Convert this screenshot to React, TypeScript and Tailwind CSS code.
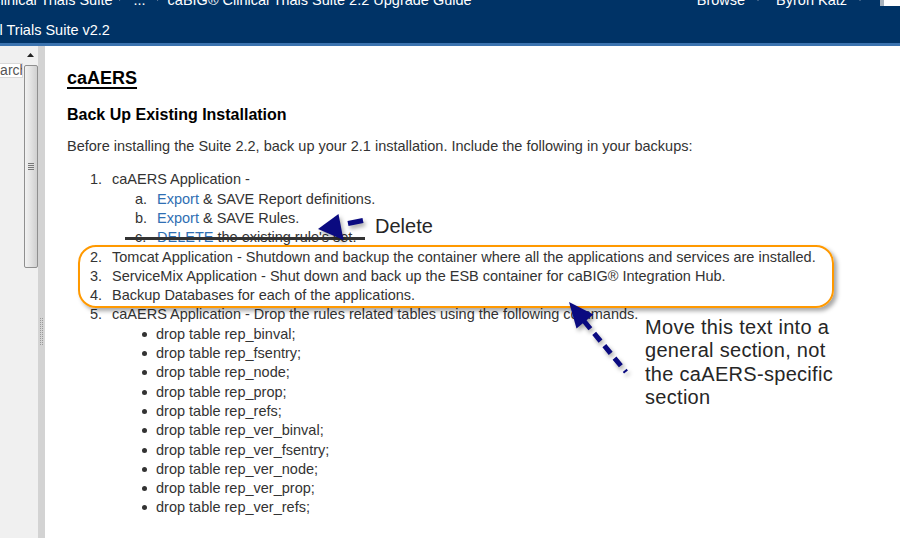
import type { ReactNode } from 'react';

const FONT = { fontFamily: '"Liberation Sans", Arial, sans-serif' };

// small gray separator used in the breadcrumb
const Sep = () => (
    <svg width="5" height="7" viewBox="0 0 5 7" className="mx-[6px] mt-[-6px]">
        <path d="M0 0 L5 3.5 L0 7 Z" fill="#7d93ad" />
    </svg>
);

const Caret = () => (
    <svg width="6" height="4" viewBox="0 0 6 4" className="ml-[10px] mt-[-2px]">
        <path d="M0 0 L6 0 L3 4 Z" fill="#8fa3ba" />
    </svg>
);

const Num = ({ n, children }: { n: string; children: ReactNode }) => (
    <div className="flex pl-[23px]">
        <span className="w-[22px] shrink-0">{n}</span>
        <span className="whitespace-nowrap">{children}</span>
    </div>
);

const Sub = ({ n, children }: { n: string; children: ReactNode }) => (
    <div className="flex pl-[68px]">
        <span className="w-[22px] shrink-0">{n}</span>
        <span className="whitespace-nowrap">{children}</span>
    </div>
);

const Bullet = ({ children }: { children: ReactNode }) => (
    <div className="flex pl-[75px]">
        <span className="w-[14px] shrink-0 flex pt-[7px]">
            <span className="block w-[5px] h-[5px] rounded-full bg-[#333]" />
        </span>
        <span className="whitespace-nowrap">{children}</span>
    </div>
);

const tables = [
    'rep_binval', 'rep_fsentry', 'rep_node', 'rep_prop', 'rep_refs',
    'rep_ver_binval', 'rep_ver_fsentry', 'rep_ver_node', 'rep_ver_prop', 'rep_ver_refs',
];

const Sidebar = () => (
    <div className="w-[38px] shrink-0 bg-[#f0f0f0] flex">
        {/* search box, cut off on the left */}
        <div className="w-[23px] pt-[17px]">
            <div className="h-[15px] bg-white border-y border-r border-[#d9d9d9] overflow-hidden">
                <span className="block ml-[-17px] text-[14px] leading-[13px] text-[#555] whitespace-nowrap">Search</span>
            </div>
        </div>
        {/* scrollbar */}
        <div className="w-[15px] flex flex-col items-center">
            <svg width="7" height="4" viewBox="0 0 7 4" className="mt-[7px]">
                <path d="M3.5 0 L7 4 L0 4 Z" fill="#222" />
            </svg>
            <div className="mt-[8px] w-[14px] h-[203px] rounded-[2px] border border-[#8f8f8f] bg-gradient-to-r from-[#f2f2f2] via-[#e2e2e2] to-[#cfcfcf] flex flex-col items-center justify-center gap-[1px]">
                <span className="block w-[6px] h-[1px] bg-[#777]" />
                <span className="block w-[6px] h-[1px] bg-[#777]" />
                <span className="block w-[6px] h-[1px] bg-[#777]" />
                <span className="block w-[6px] h-[1px] bg-[#777]" />
            </div>
        </div>
    </div>
);

const Splitter = () => (
    <div className="w-[7px] shrink-0 bg-[#d3d3d3] flex justify-center pt-[272px]">
        <div className="w-[3px] h-[27px] border-x border-dotted border-[#9a9a9a]" />
    </div>
);

export default function App() {
    return (
        <div className="relative w-[900px] h-[538px] overflow-hidden bg-white text-[#333]" style={FONT}>
            {/* top navigation */}
            <header className="h-[46px] bg-[#003366] border-b-[3px] border-[#3b73af] text-white text-[14.5px] leading-[18px] overflow-hidden">
                <div className="flex items-center h-[18px] mt-[-9px] whitespace-nowrap">
                    <span className="ml-[-10px]">Clinical Trials Suite</span>
                    <Sep />
                    <span className="ml-[4px]">...</span>
                    <span className="ml-[5px]"><Sep /></span>
                    <span>caBIG® Clinical Trials Suite 2.2 Upgrade Guide</span>
                    <div className="ml-auto flex items-center">
                        <span>Browse</span>
                        <Caret />
                        <span className="ml-[15px]">Byron Katz</span>
                        <Caret />
                        <span className="ml-[17px] self-start h-[15px] w-[20px] flex">
                            <span className="w-[4px] bg-[#a9b3bd]" />
                            <span className="flex-1 bg-white" />
                        </span>
                    </div>
                </div>
                <div className="mt-[12px] whitespace-nowrap">
                    <span className="ml-[-44px]">Clinical Trials Suite v2.2</span>
                </div>
            </header>

            <div className="flex h-[492px]">
                <Sidebar />
                <Splitter />

                {/* page content */}
                <main className="flex-1 pl-[22px] pt-[22px]">
                    <h1 className="text-[18px] leading-[21px] font-bold text-black underline decoration-2 underline-offset-[3px]">caAERS</h1>
                    <h2 className="mt-[16px] text-[16px] leading-[19px] font-bold text-black">Back Up Existing Installation</h2>
                    <p className="mt-[13px] text-[14.5px] leading-[19.4px] whitespace-nowrap">
                        Before installing the Suite 2.2, back up your 2.1 installation. Include the following in your backups:
                    </p>
                    <div className="mt-[14px] text-[14.5px] leading-[19.3px]">
                        <Num n="1.">caAERS Application -</Num>
                        <Sub n="a."><span className="text-[#2f6fb3]">Export</span> &amp; SAVE Report definitions.</Sub>
                        <Sub n="b."><span className="text-[#2f6fb3]">Export</span> &amp; SAVE Rules.</Sub>
                        <Sub n="c."><span className="text-[#2f6fb3]">DELETE</span> the existing rule's set.</Sub>
                        <Num n="2.">Tomcat Application - Shutdown and backup the container where all the applications and services are installed.</Num>
                        <Num n="3.">ServiceMix Application - Shut down and back up the ESB container for caBIG® Integration Hub.</Num>
                        <Num n="4.">Backup Databases for each of the applications.</Num>
                        <Num n="5.">caAERS Application - Drop the rules related tables using the following commands.</Num>
                        {tables.map(t => (
                            <Bullet key={t}>drop table {t};</Bullet>
                        ))}
                    </div>
                </main>
            </div>

            {/* review annotations */}
            <div className="absolute left-[125px] top-[237px] w-[240px] h-[3px] bg-[#333]" />
            <div className="absolute left-[78px] top-[245px] w-[756px] h-[63px] rounded-[18px] border-2 border-[#ff9900] shadow-[3px_3px_4px_rgba(0,0,0,0.35)]" />

            <svg className="absolute left-0 top-0 drop-shadow-[2px_3px_2px_rgba(0,0,0,0.35)]" width="900" height="538" viewBox="0 0 900 538">
                <line x1="348" y1="223.5" x2="363" y2="220.5" stroke="#0a0a80" strokeWidth="5" />
                <path d="M318 229 L338.5 214 L343.5 240 Z" fill="#0a0a80" />
                <line x1="584" y1="321" x2="626" y2="372" stroke="#0a0a80" strokeWidth="5" strokeDasharray="10 6" />
                <path d="M569 302 L593.5 314.5 L576.5 328.5 Z" fill="#0a0a80" />
            </svg>

            <div className="absolute left-[375px] top-[215px] text-[20px] leading-[23px] text-[#262626]">Delete</div>
            <div className="absolute left-[645px] top-[316px] text-[20px] leading-[23.4px] tracking-[0.3px] text-[#262626]">
                Move this text into a<br />
                general section, not<br />
                the caAERS-specific<br />
                section
            </div>
        </div>
    );
}
